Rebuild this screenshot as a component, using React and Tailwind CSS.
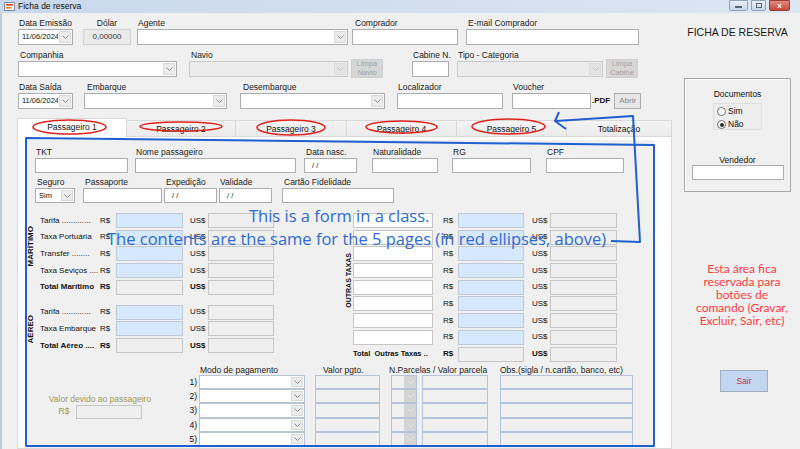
import React from 'react';

const Chev = ({ color = '#8c8c8c' }) => (
  <svg width="7" height="4" viewBox="0 0 7 4">
    <path d="M0.5 0.5L3.5 3.5L6.5 0.5" fill="none" stroke={color} strokeWidth="1" />
  </svg>
);

const Lbl = ({ children, className = '' }) => (
  <div className={`h-[10px] text-[8.5px] leading-[10px] whitespace-nowrap text-[#1a1a1a] ${className}`}>{children}</div>
);

const Box = ({ h = 'h-[16px]', className = '', children }) => (
  <div className={`${h} border border-[#abadb3] bg-white text-[7.5px] leading-[13px] px-[3px] whitespace-nowrap ${className}`}>{children}</div>
);

const Combo = ({ value, disabled, h = 'h-[16px]', className = '' }) => (
  <div className={`${h} border flex ${disabled ? 'border-[#c9c9c9] bg-[#ececec]' : 'border-[#abadb3] bg-white'} ${className}`}>
    <div className="flex-1 text-[7.5px] leading-[13px] pl-[3px] whitespace-nowrap overflow-hidden">{value}</div>
    <div className={`w-[12px] m-[1px] flex items-center justify-center border ${disabled ? 'border-[#dcdcdc] bg-[#e4e4e4]' : 'border-[#dadada] bg-[#ececec]'}`}>
      <Chev color={disabled ? '#c4c4c4' : '#8c8c8c'} />
    </div>
  </div>
);

const Field = ({ label, className = '', labelClass = 'pl-[1px]', children }) => (
  <div className={`flex flex-col ${className}`}>
    <Lbl className={labelClass}>{label}</Lbl>
    <div className="mt-[1px]">{children}</div>
  </div>
);

const GrayBtn = ({ children }) => (
  <div className="w-[32px] h-[19px] bg-[#d6d6d6] border border-[#cfcfcf] text-[#a3a3a3] text-[7.5px] leading-[8.5px] flex flex-col items-center justify-center text-center">
    {children}
  </div>
);

// money rows of the passenger form
const MoneyRow = ({ label, bold }) => (
  <div className={`flex items-center h-[15px] text-[8px] ${bold ? 'font-bold' : ''}`}>
    <div className="w-[60px] whitespace-nowrap">{label}</div>
    <div className="w-[16px]">R$</div>
    <div className={`w-[67px] h-[15px] border ${bold ? 'border-[#c6c6c6] bg-[#efefef]' : 'border-[#bfcad6] bg-[#d6e8fc]'}`} />
    <div className="w-[25px] pl-[7px]">US$</div>
    <div className="w-[66px] h-[15px] border border-[#c6c6c6] bg-[#efefef]" />
  </div>
);

const OtherRow = ({ total }) => (
  <div className={`flex items-center h-[15px] text-[8px] ${total ? 'font-bold' : ''}`}>
    {total ? (
      <div className="w-[80px] whitespace-nowrap text-[7.5px]">Total&nbsp; Outras Taxas ..</div>
    ) : (
      <div className="w-[80px] h-[15px] border border-[#c6c6c6] bg-white" />
    )}
    <div className="w-[25px] pl-[10px]">R$</div>
    <div className={`w-[66px] h-[15px] border ${total ? 'border-[#c6c6c6] bg-[#efefef]' : 'border-[#bfcad6] bg-[#d6e8fc]'}`} />
    <div className="w-[26px] pl-[8px]">US$</div>
    <div className="w-[67px] h-[15px] border border-[#c6c6c6] bg-[#efefef]" />
  </div>
);

const Radio = ({ label, checked }) => (
  <div className="flex items-center h-[9px] gap-[2px]">
    <div className="w-[9px] h-[9px] rounded-full border border-[#6f6f6f] bg-white flex items-center justify-center">
      {checked && <div className="w-[4px] h-[4px] rounded-full bg-[#2a2a2a]" />}
    </div>
    <span className="text-[8.5px] leading-[9px]">{label}</span>
  </div>
);

const tabs = [
  { t: 'Passageiro 1', w: 'w-[110px]', active: true },
  { t: 'Passageiro 2', w: 'w-[109px]' },
  { t: 'Passageiro 3', w: 'w-[111px]' },
  { t: 'Passageiro 4', w: 'w-[110px]' },
  { t: 'Passageiro 5', w: 'w-[110px]' },
  { t: 'Totalização', w: 'w-[105px]' },
];

const payRows = [1, 2, 3, 4, 5];

export default function App() {
  return (
    <div className="relative w-[800px] h-[449px] overflow-hidden bg-[#f0f0f0] font-['Liberation_Sans',Arial,sans-serif] text-[#111]">
      {/* title bar */}
      <div className="h-[13px] flex items-start bg-gradient-to-r from-[#c9d8ec] to-[#dce6f3]">
        <svg className="ml-[4px] mt-[2px]" width="11" height="9" viewBox="0 0 11 9">
          <rect x="0.5" y="0.5" width="10" height="8" fill="#f6f6f6" stroke="#7d8ca3" />
          <rect x="2" y="2" width="7" height="1.6" fill="#d8432b" />
          <rect x="2" y="5" width="5" height="1.6" fill="#e2822d" />
        </svg>
        <div className="ml-[3px] text-[8.5px] leading-[13px] text-[#111]">Ficha de reserva</div>
        <div className="ml-auto flex gap-[3px] mr-[10px]">
          <div className="w-[19px] h-[11px] rounded-b-[2px] border border-[#8fa3bf] bg-gradient-to-b from-[#e9f0f8] to-[#c9d7ea] flex items-center justify-center">
            <div className="w-[7px] h-[2px] bg-[#56657a] mt-[3px]" />
          </div>
          <div className="w-[15px] h-[11px] rounded-b-[2px] border border-[#8fa3bf] bg-gradient-to-b from-[#e9f0f8] to-[#c9d7ea] flex items-center justify-center">
            <div className="w-[6px] h-[5px] border border-[#56657a]" />
          </div>
          <div className="w-[21px] h-[11px] rounded-b-[2px] border border-[#9b3d36] bg-gradient-to-b from-[#e08a80] to-[#c5473c] flex items-center justify-center text-white text-[8px] font-bold leading-none">
            x
          </div>
        </div>
      </div>

      <div className="flex border-l-[2px] border-[#bfcbdb] h-[436px]">
        {/* left column */}
        <div className="w-[670px] flex flex-col">
          {/* row 1 */}
          <div className="flex pt-[5px] pl-[16px]">
            <Field label="Data Emissão" className="w-[55px]"><Combo value="11/06/2024" className="w-full" /></Field>
            <Field label="Dólar" labelClass="text-center" className="w-[48px] ml-[10px]">
              <div className="h-[16px] border border-[#d0d0d0] bg-[#eaeaea] text-center text-[8px] leading-[14px] text-[#333]">0,00000</div>
            </Field>
            <Field label="Agente" className="w-[211px] ml-[6px]"><Combo className="w-full" /></Field>
            <Field label="Comprador" labelClass="pl-[3px]" className="w-[106px] ml-[4px]"><Box className="w-full" /></Field>
            <Field label="E-mail Comprador" labelClass="pl-[2px]" className="w-[173px] ml-[8px]"><Box className="w-full" /></Field>
          </div>

          {/* row 2 */}
          <div className="flex mt-[5px] pl-[16px]">
            <Field label="Companhia" labelClass="pl-[2px]" className="w-[159px]"><Combo className="w-full" /></Field>
            <Field label="Navio" labelClass="pl-[2px]" className="w-[159px] ml-[12px]"><Combo disabled className="w-full" /></Field>
            <div className="ml-[3px] pt-[9px]"><GrayBtn>Limpa<br />Navio</GrayBtn></div>
            <Field label="Cabine N." className="w-[37px] ml-[29px]"><Box className="w-full" /></Field>
            <Field label="Tipo - Categoria" className="w-[146px] ml-[8px]"><Combo disabled className="w-full" /></Field>
            <div className="ml-[3px] pt-[9px]"><GrayBtn>Limpa<br />Cabine</GrayBtn></div>
          </div>

          {/* row 3 */}
          <div className="flex mt-[4px] pl-[16px]">
            <Field label="Data Saída" className="w-[55px]"><Combo value="11/06/2024" className="w-full" /></Field>
            <Field label="Embarque" labelClass="pl-[3px]" className="w-[143px] ml-[11px]"><Combo className="w-full" /></Field>
            <Field label="Desembarque" labelClass="pl-[3px]" className="w-[145px] ml-[13px]"><Combo className="w-full" /></Field>
            <Field label="Localizador" className="w-[106px] ml-[12px]"><Box className="w-full" /></Field>
            <Field label="Voucher" className="w-[79px] ml-[9px]"><Box className="w-full" /></Field>
            <div className="flex items-center mt-[11px] h-[16px]">
              <span className="ml-[1px] text-[8px] font-bold">.PDF</span>
              <div className="ml-[4px] w-[27px] h-[16px] border border-[#adadad] bg-[#e7e7e7] text-[#8a8a8a] text-[8px] leading-[14px] text-center">Abrir</div>
            </div>
          </div>

          {/* tabs */}
          <div className="flex items-end mt-[9px] ml-[15px] h-[18px]">
            {tabs.map((tb) =>
              tb.active ? (
                <div key={tb.t} className={`${tb.w} h-[19px] -mb-[1px] relative z-10 bg-white border-l border-t border-r border-[#d9d9d9] flex items-center justify-center text-[8.5px] leading-[10px] pb-[3px]`}>
                  {tb.t}
                </div>
              ) : (
                <div key={tb.t} className={`${tb.w} h-[16px] bg-gradient-to-b from-[#f4f4f4] to-[#ebebeb] border-t border-r border-[#d9d9d9] flex items-center justify-center text-[8.5px] leading-[10px]`}>
                  {tb.t}
                </div>
              )
            )}
          </div>

          {/* tab panel */}
          <div className="ml-[15px] w-[655px] h-[330px] border border-[#d9d9d9] bg-white pl-[8px] pt-[3px]">
            <div className="w-[628px] h-[308px] bg-[#f0f0f0] flex flex-col">
              {/* row A */}
              <div className="flex pt-[7px]">
                <Field label="TKT" className="w-[93px] ml-[9px]"><Box h="h-[15px]" className="w-full" /></Field>
                <Field label="Nome passageiro" className="w-[161px] ml-[7px]"><Box h="h-[15px]" className="w-full" /></Field>
                <Field label="Data nasc." labelClass="pl-[2px]" className="w-[53px] ml-[8px]"><Box h="h-[15px]" className="w-full pl-[7px]">/ /</Box></Field>
                <Field label="Naturalidade" className="w-[66px] ml-[15px]"><Box h="h-[15px]" className="w-full" /></Field>
                <Field label="RG" className="w-[79px] ml-[14px]"><Box h="h-[15px]" className="w-full" /></Field>
                <Field label="CPF" className="w-[78px] ml-[15px]"><Box h="h-[15px]" className="w-full" /></Field>
              </div>

              {/* row B */}
              <div className="flex mt-[4px]">
                <Field label="Seguro" labelClass="pl-[2px]" className="w-[40px] ml-[9px]"><Combo h="h-[15px]" value="Sim" className="w-full" /></Field>
                <Field label="Passaporte" labelClass="pl-[2px]" className="w-[79px] ml-[8px]"><Box h="h-[15px]" className="w-full" /></Field>
                <Field label="Expedição" labelClass="pl-[2px]" className="w-[53px] ml-[2px]"><Box h="h-[15px]" className="w-full pl-[7px]">/ /</Box></Field>
                <Field label="Validade" className="w-[53px] ml-[2px]"><Box h="h-[15px]" className="w-full pl-[7px]">/ /</Box></Field>
                <Field label="Cartão Fidelidade" labelClass="pl-[2px]" className="w-[112px] ml-[10px]"><Box h="h-[15px]" className="w-full" /></Field>
              </div>

              {/* money */}
              <div className="flex mt-[10px]">
                <div className="flex flex-col w-[248px]">
                  <div className="flex">
                    <div className="w-[14px] flex items-center pl-[1px] pb-[16px]">
                      <span className="[writing-mode:vertical-rl] rotate-180 text-[8px] font-bold leading-none">MARÍTIMO</span>
                    </div>
                    <div className="flex flex-col gap-[1.7px]">
                      <MoneyRow label="Tarifa ............." />
                      <MoneyRow label="Taxa Portuária" />
                      <MoneyRow label="Transfer ........" />
                      <MoneyRow label="Taxa Seviços ...." />
                      <MoneyRow label="Total Marítimo" bold />
                    </div>
                  </div>
                  <div className="flex mt-[10px]">
                    <div className="w-[14px] flex items-center pl-[1px]">
                      <span className="[writing-mode:vertical-rl] rotate-180 text-[8px] font-bold leading-none">AÉREO</span>
                    </div>
                    <div className="flex flex-col gap-[1.7px]">
                      <MoneyRow label="Tarifa ............." />
                      <MoneyRow label="Taxa Embarque" />
                      <MoneyRow label="Total Aéreo ...." bold />
                    </div>
                  </div>
                </div>
                <div className="flex ml-[71px]">
                  <div className="w-[8px] flex items-center pb-[13px]">
                    <span className="[writing-mode:vertical-rl] rotate-180 text-[7px] font-bold leading-none">OUTRAS TAXAS</span>
                  </div>
                  <div className="flex flex-col gap-[1.7px]">
                    {[1, 2, 3, 4, 5, 6, 7, 8].map((i) => (
                      <OtherRow key={i} />
                    ))}
                    <OtherRow total />
                  </div>
                </div>
              </div>

              {/* payment */}
              <div className="flex mt-[3px]">
                <div className="w-[159px] pt-[29px]">
                  <div className="ml-[22px] w-[104px] flex flex-col items-center text-[#9c9a5a]">
                    <div className="text-[8.5px] leading-[10px] whitespace-nowrap">Valor devido ao passageiro</div>
                    <div className="flex items-center mt-[1px]">
                      <span className="w-[17px] text-[8.5px]">R$</span>
                      <div className="w-[66px] h-[14px] border border-[#c8c8c8] bg-[#efefef]" />
                    </div>
                  </div>
                </div>
                <div className="w-[14px] flex flex-col pt-[10px]">
                  {payRows.map((n) => (
                    <div key={n} className="h-[14.4px] text-[8.5px] leading-[14px] text-right pr-[2px]">{n})</div>
                  ))}
                </div>
                <div className="flex flex-col w-[106px]">
                  <Lbl className="pl-[1px]">Modo de pagamento</Lbl>
                  {payRows.map((n) => (
                    <div key={n} className="h-[14.4px] border border-[#b8c4d4] bg-white flex">
                      <div className="flex-1" />
                      <div className="w-[12px] m-[1px] border border-[#dadada] bg-[#ececec] flex items-center justify-center"><Chev /></div>
                    </div>
                  ))}
                </div>
                <div className="flex flex-col w-[65px] ml-[10px]">
                  <Lbl className="pl-[8px]">Valor pgto.</Lbl>
                  {payRows.map((n) => (
                    <div key={n} className="h-[14.4px] border border-[#b4c5db] bg-[#f0f0f0]" />
                  ))}
                </div>
                <div className="flex flex-col ml-[11px]">
                  <Lbl className="-ml-[2px]">N.Parcelas / Valor parcela</Lbl>
                  {payRows.map((n) => (
                    <div key={n} className="flex h-[14.4px]">
                      <div className="w-[26px] border border-[#b4c5db] bg-[#f0f0f0] flex">
                        <div className="flex-1" />
                        <div className="w-[12px] bg-[#d4d4d4] flex items-center justify-center"><Chev color="#ececec" /></div>
                      </div>
                      <div className="w-[66px] ml-[5px] border border-[#b4c5db] bg-[#f0f0f0]" />
                    </div>
                  ))}
                </div>
                <div className="flex flex-col w-[133px] ml-[12px]">
                  <Lbl>Obs.(sigla / n.cartão, banco, etc)</Lbl>
                  {payRows.map((n) => (
                    <div key={n} className="h-[14.4px] border border-[#b4c5db] bg-[#f0f0f0]" />
                  ))}
                </div>
              </div>
            </div>
          </div>
        </div>

        {/* right column */}
        <div className="w-[128px] flex flex-col">
          <div className="mt-[13px] pl-[3px] text-center text-[10.5px] leading-[12px] text-[#1a1a1a] whitespace-nowrap">FICHA DE RESERVA</div>
          <div className="mt-[40px] ml-[12px] w-[107px] h-[114px] border border-[#a8a8a8] shadow-[inset_1px_1px_0_#ffffff] flex flex-col items-center">
            <div className="mt-[10px] text-[8.5px] leading-[10px]">Documentos</div>
            <div className="mt-[4px] w-[49px] h-[27px] border border-[#dedede] bg-[#ededed] flex flex-col pl-[3px] pt-[3px] gap-[4px]">
              <Radio label="Sim" />
              <Radio label="Não" checked />
            </div>
            <div className="mt-[25px] text-[8.5px] leading-[10px]">Vendedor</div>
            <div className="w-[92px] h-[15px] border border-[#abadb3] bg-white" />
          </div>
          <div className="mt-[70px] pl-[12px] text-center text-[#ff3b3b] text-[12px] leading-[13px] font-['Lato',sans-serif] whitespace-nowrap">
            Esta área fica<br />reservada para<br />botões de<br />comando (Gravar,<br />Excluir, Sair, etc)
          </div>
          <div className="mt-[43px] ml-[48px] w-[48px] h-[22px] bg-[#c3d8f0] border border-[#a2adbd] text-[#c4314b] text-[8.5px] flex items-center justify-center">
            Sair
          </div>
        </div>
      </div>

      {/* annotations drawn over the screenshot */}
      <svg className="absolute top-0 left-0 z-20 pointer-events-none" width="800" height="449" viewBox="0 0 800 449">
        <g fill="none" stroke="#e0221c" strokeWidth="1.6">
          <ellipse cx="69.5" cy="127" rx="36.5" ry="7" />
          <ellipse cx="181" cy="126.5" rx="41" ry="4.5" />
          <ellipse cx="291" cy="127.5" rx="34" ry="7.5" />
          <ellipse cx="401.5" cy="127" rx="35.5" ry="6" />
          <ellipse cx="508.5" cy="126.5" rx="36.5" ry="7.5" />
        </g>
        <g fill="none" stroke="#1f5fcf" strokeWidth="2" strokeLinejoin="round">
          <polygon points="26,138 654,145 654,446 26,446" />
          <polyline points="611,241 640,242 633,116 556,121" />
          <polyline points="559,112 555,121 566,129" />
        </g>
      </svg>
      <div className="absolute z-20 left-[249px] top-[207px] text-[16.5px] leading-[17px] text-[#2e6bd3] font-['Open_Sans',sans-serif] whitespace-nowrap pointer-events-none">
        This is a form in a class.
      </div>
      <div className="absolute z-20 left-[107px] top-[230px] text-[16.5px] leading-[17px] text-[#2e6bd3] font-['Open_Sans',sans-serif] whitespace-nowrap pointer-events-none">
        The contents are the same for the 5 pages (in red ellipses, above)
      </div>
    </div>
  );
}
